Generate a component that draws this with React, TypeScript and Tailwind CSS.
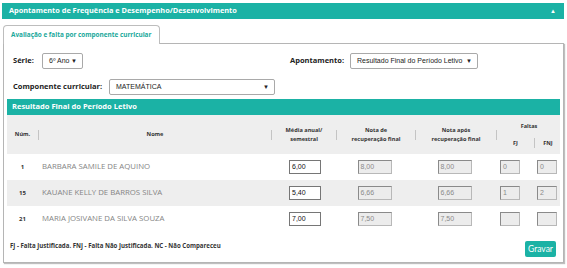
import React from "react";

const rows = [
  { num: "1", name: "BARBARA SAMILE DE AQUINO", media: "6,00", rec: "8,00", apos: "8,00", fj: "0", fnj: "0", bg: "bg-white" },
  { num: "15", name: "KAUANE KELLY DE BARROS SILVA", media: "5,40", rec: "6,66", apos: "6,66", fj: "1", fnj: "2", bg: "bg-[#eeeeee]" },
  { num: "21", name: "MARIA JOSIVANE DA SILVA SOUZA", media: "7,00", rec: "7,50", apos: "7,50", fj: "", fnj: "", bg: "bg-white" },
];

function Select({ text, width }: { text: string; width: string }) {
  return (
    <div
      className={`${width} h-[16px] border border-[#a9a9a9] rounded-[2px] bg-white flex items-center justify-between pl-[6px] pr-[5px] text-[7px] text-[#222] font-['Liberation_Sans',Arial,sans-serif]`}
    >
      <span className="whitespace-nowrap">{text}</span>
      <span className="text-[6px] leading-none">▼</span>
    </div>
  );
}

function Sep() {
  return <div className="w-px h-[10px] bg-[#c4c4c4] shrink-0" />;
}

function Box({ value, enabled, width }: { value: string; enabled?: boolean; width: string }) {
  return (
    <div
      className={`${width} h-[14px] flex items-center pl-[2px] text-[7px] font-['Liberation_Sans',Arial,sans-serif] ${
        enabled
          ? "bg-white border border-[#767676] text-[#111]"
          : "bg-[#ececec] border border-[#b8b8b8] border-t-[#8a8a8a] border-l-[#8a8a8a] text-[#8a8a8a]"
      }`}
    >
      {value}
    </div>
  );
}

const cols = "grid grid-cols-[31px_234px_65px_79px_81px_38px_26px]";

export default function App() {
  return (
    <div className="w-[567px] h-[268px] bg-white pt-[3px] pl-[2px] pr-[3px] font-['Open_Sans',sans-serif] overflow-hidden">
      <div className="h-[16px] bg-[#1bb2a5] flex items-center justify-between pl-[7px] pr-[8px]">
        <span className="text-white font-bold text-[7.35px] whitespace-nowrap">
          Apontamento de Frequência e Desempenho/Desenvolvimento
        </span>
        <span className="text-white text-[6px] leading-none">▲</span>
      </div>

      <div className="mt-[6px] pl-[1px] flex">
        <div className="relative -mb-px z-10 w-[157px] h-[19px] bg-white border border-[#bdbdbd] border-b-0 rounded-t-[4px] flex items-center pl-[7px]">
          <span className="text-[#1aa89b] font-bold text-[6.4px] whitespace-nowrap">
            Avaliação e falta por componente curricular
          </span>
        </div>
      </div>

      <div className="ml-[1px] h-[220px] border border-[#b5b5b5] shadow-[1px_1px_1px_rgba(0,0,0,0.25)] px-[3px]">
        <div className="pl-[6px] pt-[9px]">
          <div className="flex items-center h-[16px]">
            <div className="w-[277px] flex items-center">
              <span className="w-[29px] text-[7.5px] font-bold text-[#222]">Série:</span>
              <Select text="6º Ano" width="w-[41px]" />
            </div>
            <span className="w-[60px] text-[7.5px] font-bold text-[#222]">Apontamento:</span>
            <Select text="Resultado Final do Período Letivo" width="w-[128px]" />
          </div>
          <div className="flex items-center h-[16px] mt-[10px]">
            <span className="w-[96px] text-[7.5px] font-bold text-[#222] whitespace-nowrap">Componente curricular:</span>
            <Select text="MATEMÁTICA" width="w-[166px]" />
          </div>
        </div>

        <div className="mt-[4px] h-[16px] bg-[#1bb2a5] flex items-center pl-[5px]">
          <span className="text-white font-bold text-[7.5px]">Resultado Final do Período Letivo</span>
        </div>

        <div className={`${cols} h-[39px] bg-[#eeeeee] text-[5.6px] font-bold text-[#333] leading-[9px]`}>
          <div className="flex items-center">
            <span className="flex-1 text-center">Núm.</span>
          </div>
          <div className="flex items-center">
            <Sep />
            <span className="flex-1 text-center">Nome</span>
            <Sep />
          </div>
          <div className="flex items-center">
            <span className="flex-1 text-center">
              Média anual/
              <br />
              semestral
            </span>
            <Sep />
          </div>
          <div className="flex items-center">
            <span className="flex-1 text-center">
              Nota de
              <br />
              recuperação final
            </span>
            <Sep />
          </div>
          <div className="flex items-center">
            <span className="flex-1 text-center">
              Nota após
              <br />
              recuperação final
            </span>
            <Sep />
          </div>
          <div className="col-span-2 flex flex-col">
            <div className="h-[17px] flex items-end justify-center pb-[1px]">Faltas</div>
            <div className="flex-1 flex items-center">
              <span className="w-[37px] text-center">FJ</span>
              <Sep />
              <span className="flex-1 text-center">FNJ</span>
            </div>
          </div>
        </div>

        {rows.map((r) => (
          <div key={r.num} className={`${cols} h-[26px] ${r.bg} items-center`}>
            <div className="text-center text-[6px] font-bold text-[#333]">{r.num}</div>
            <div className="pl-[4px] text-[7.8px] text-[#858585] whitespace-nowrap">{r.name}</div>
            <div className="flex justify-center pl-[1px]">
              <Box value={r.media} enabled width="w-[32px]" />
            </div>
            <div className="flex justify-center pr-[4px]">
              <Box value={r.rec} width="w-[34px]" />
            </div>
            <div className="flex justify-center pr-[4px]">
              <Box value={r.apos} width="w-[34px]" />
            </div>
            <div className="flex pl-[3px]">
              <Box value={r.fj} width="w-[20px]" />
            </div>
            <div className="flex pl-[2px]">
              <Box value={r.fnj} width="w-[20px]" />
            </div>
          </div>
        ))}

        <div className="flex justify-between items-start pt-[8px] pl-[3px] pr-[4px]">
          <span className="text-[6.1px] font-bold text-[#333] mt-[1px] whitespace-nowrap">
            FJ - Falta Justificada. FNJ - Falta Não Justificada. NC - Não Compareceu
          </span>
          <button className="h-[16px] w-[31px] bg-[#1bb2a5] rounded-[2px] text-white text-[8.5px] font-['Lato',sans-serif] mt-[1px]">
            Gravar
          </button>
        </div>
      </div>
    </div>
  );
}
